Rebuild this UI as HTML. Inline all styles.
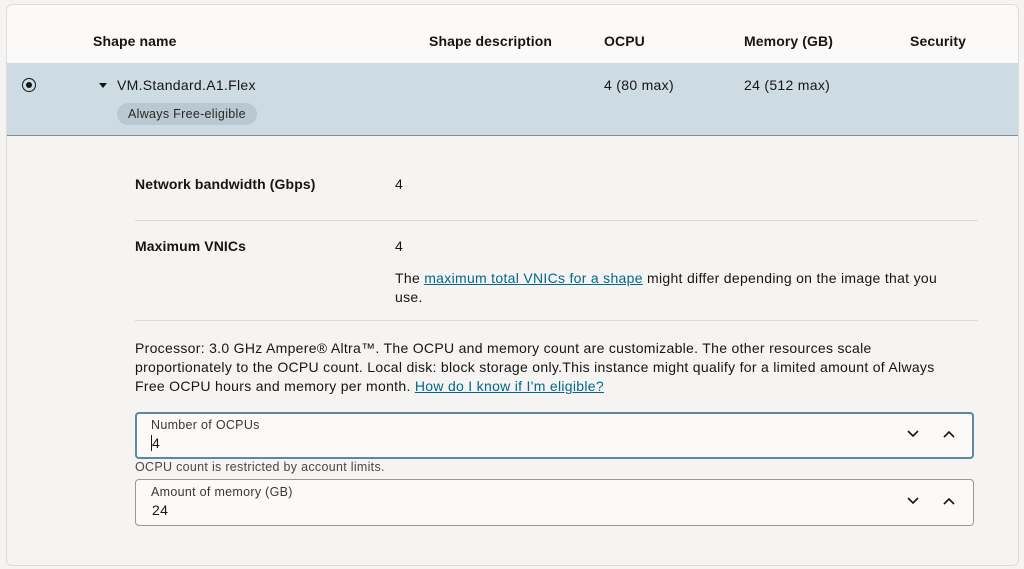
<!DOCTYPE html>
<html><head><meta charset="utf-8"><style>
*{margin:0;padding:0;box-sizing:border-box}
body{width:1024px;height:569px;background:#f5f4f2;font-family:"Liberation Sans",sans-serif;color:#161513;position:relative;overflow:hidden;font-size:14px;letter-spacing:0.3px}
.a{position:absolute;white-space:nowrap}
.b{font-weight:bold;letter-spacing:0.1px}
a{color:#00688c;text-decoration:underline}
.box{position:absolute;left:135px;width:839px;height:47px;background:#fbfaf9;border:1px solid #9a9895;border-radius:4px}
.box .l{position:absolute;left:15px;top:5px;font-size:12.5px;color:#3a3836}
.box .v{position:absolute;left:16px;top:22px;font-size:14px}
.hr{position:absolute;left:135px;width:843px;height:1px;background:#dcdad7}
</style></head><body>
<div class="a" style="left:6px;top:4px;width:1013px;height:562px;border:1px solid #dedcd9;border-radius:6px;background:#f5f4f2"></div>
<div class="a" style="left:7px;top:5px;width:1011px;height:58px;background:#fbfaf8;border-radius:6px 6px 0 0"></div>
<div class="a b" style="left:93px;top:33px">Shape name</div>
<div class="a b" style="left:429px;top:33px">Shape description</div>
<div class="a b" style="left:604px;top:33px">OCPU</div>
<div class="a b" style="left:744px;top:33px">Memory (GB)</div>
<div class="a b" style="left:910px;top:33px">Security</div>
<div class="a" style="left:7px;top:63px;width:1011px;height:73px;background:#cddbe3;border-bottom:1px solid #8c8a87"></div>
<div class="a" style="left:22px;top:78px;width:14px;height:14px;border:1.5px solid #161513;border-radius:50%"></div>
<div class="a" style="left:26px;top:82px;width:6px;height:6px;background:#161513;border-radius:50%"></div>
<div class="a" style="left:99px;top:83px;width:0;height:0;border-left:4px solid transparent;border-right:4px solid transparent;border-top:5px solid #161513"></div>
<div class="a" style="left:117px;top:77px">VM.Standard.A1.Flex</div>
<div class="a" style="left:117px;top:103px;height:22px;padding:0 11px;line-height:22px;background:#b9c8d1;border-radius:11px;font-size:12.5px;color:#2a2826">Always Free-eligible</div>
<div class="a" style="left:604px;top:77px">4 (80 max)</div>
<div class="a" style="left:744px;top:77px">24 (512 max)</div>
<div class="a b" style="left:135px;top:176px">Network bandwidth (Gbps)</div>
<div class="a" style="left:395px;top:176px">4</div>
<div class="hr" style="top:220px"></div>
<div class="a b" style="left:135px;top:238px">Maximum VNICs</div>
<div class="a" style="left:395px;top:238px">4</div>
<div class="a" style="left:395px;top:269px;line-height:19px">The <a>maximum total VNICs for a shape</a> might differ depending on the image that you<br>use.</div>
<div class="hr" style="top:320px"></div>
<div class="a" style="left:135px;top:339px;line-height:19px">Processor: 3.0 GHz Ampere® Altra™. The OCPU and memory count are customizable. The other resources scale<br>proportionately to the OCPU count. Local disk: block storage only.This instance might qualify for a limited amount of Always<br>Free OCPU hours and memory per month. <a>How do I know if I'm eligible?</a></div>
<div class="box" style="top:412px;border:2px solid #5b88a2"><div class="l" style="left:14px;top:4px">Number of OCPUs</div><div class="v" style="left:14px;top:21px;border-left:1px solid #161513;padding-left:0">4</div>
<svg class="a" style="left:769px;top:15px" width="14" height="10"><path d="M2 2l5 5 5-5" fill="none" stroke="#161513" stroke-width="1.6"/></svg>
<svg class="a" style="left:805px;top:15px" width="14" height="10"><path d="M2 8l5-5 5 5" fill="none" stroke="#161513" stroke-width="1.6"/></svg></div>
<div class="a" style="left:135px;top:460px;font-size:12.5px;color:#4a4846">OCPU count is restricted by account limits.</div>
<div class="box" style="top:479px"><div class="l">Amount of memory (GB)</div><div class="v">24</div>
<svg class="a" style="left:770px;top:16px" width="14" height="10"><path d="M2 2l5 5 5-5" fill="none" stroke="#161513" stroke-width="1.6"/></svg>
<svg class="a" style="left:806px;top:16px" width="14" height="10"><path d="M2 8l5-5 5 5" fill="none" stroke="#161513" stroke-width="1.6"/></svg></div>
</body></html>
